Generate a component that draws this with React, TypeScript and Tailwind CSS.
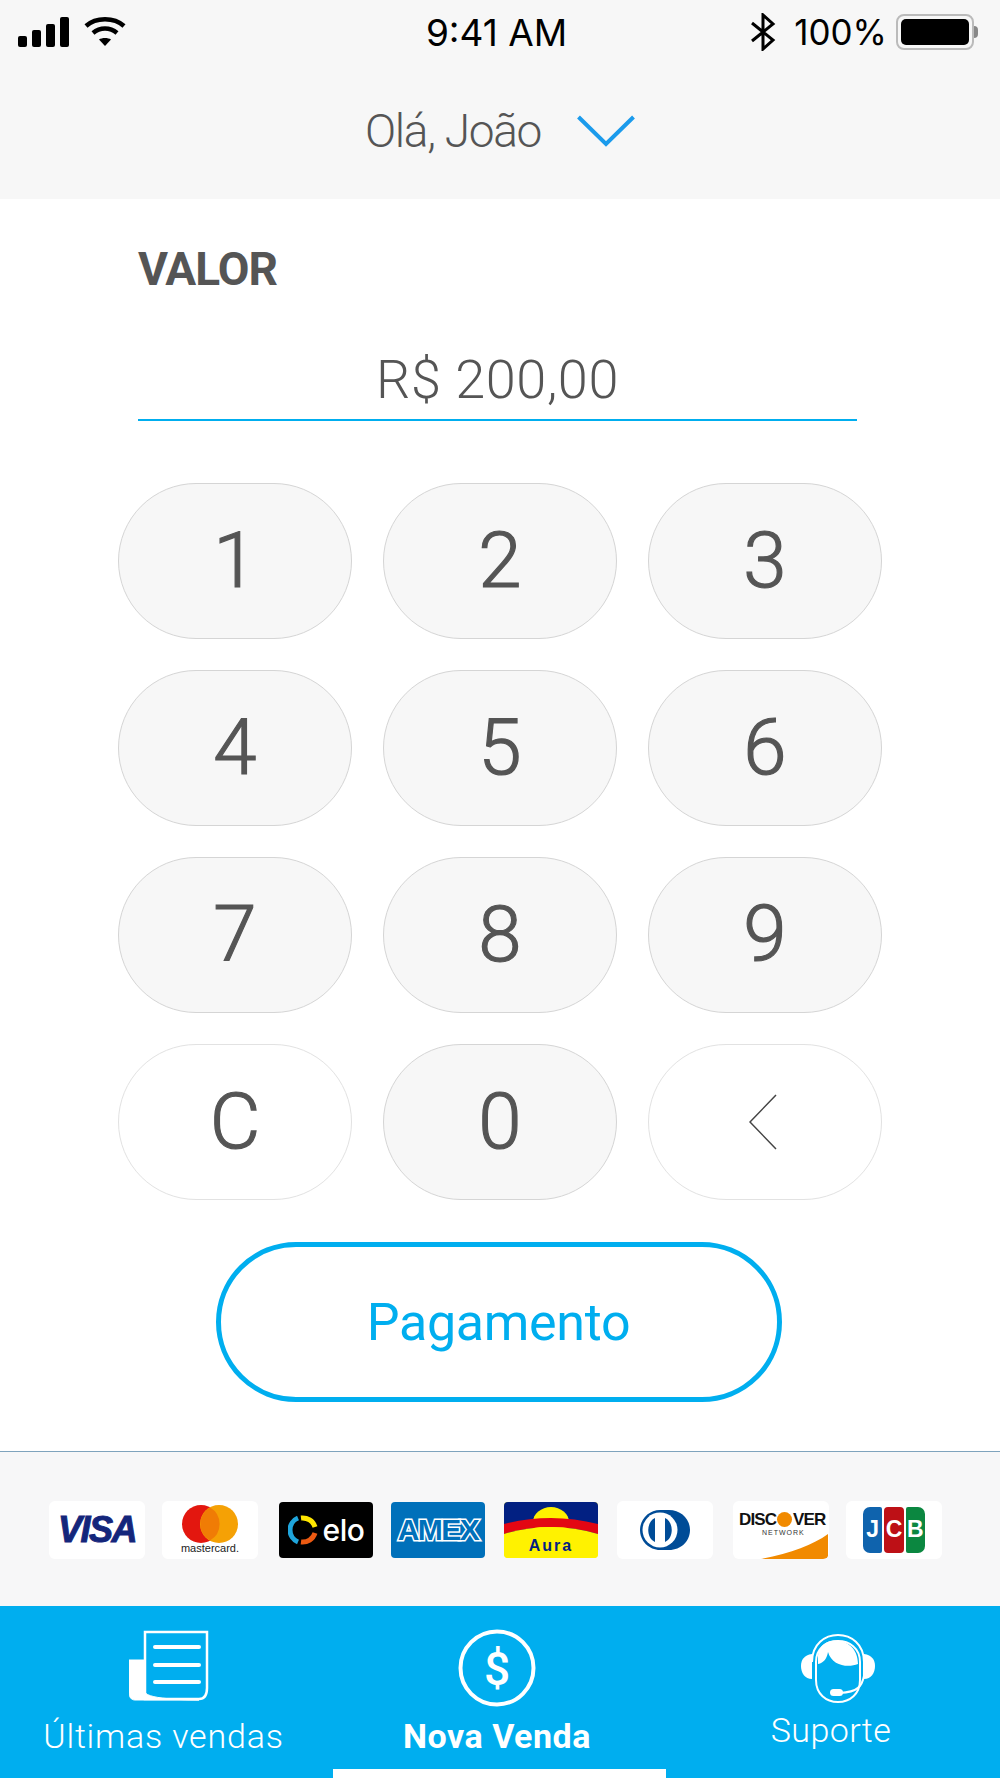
import React from "react"

const keyRows = [
  ["1", "2", "3"],
  ["4", "5", "6"],
  ["7", "8", "9"],
]

function Key({ label, plain, children }: { label?: string; plain?: boolean; children?: React.ReactNode }) {
  return (
    <div
      className={`flex h-[156px] w-[234px] items-center justify-center rounded-[78px] border text-[78px] leading-none font-light text-[#555] [-webkit-text-stroke:1.2px_#555] ${
        plain ? "border-[#e2e2e2] bg-white" : "border-[#d5d5d5] bg-[#f7f7f7]"
      }`}
    >
      {label}
      {children}
    </div>
  )
}

function StatusBar() {
  return (
    <div className="flex h-[60px] items-center justify-between pr-[22px] pl-[18px] text-black">
      <div className="flex w-[300px] items-center gap-[14px]">
        <svg width="52" height="32" viewBox="0 0 52 32" fill="#000">
          <rect x="0" y="20" width="9" height="11" rx="2" />
          <rect x="14" y="14" width="9" height="17" rx="2" />
          <rect x="28" y="8" width="9" height="23" rx="2" />
          <rect x="42" y="1" width="9" height="30" rx="2" />
        </svg>
        <svg width="42" height="32" viewBox="0 0 42 32" fill="none" stroke="#000" strokeWidth="4.5">
          <path d="M2 10C12 1 30 1 40 10" />
          <path d="M9 17C16 11 26 11 33 17" />
          <path d="M21 30L15 23.5C18 21.5 24 21.5 27 23.5Z" fill="#000" stroke="none" />
        </svg>
      </div>
      <div className="mr-[3px] font-['Inter',sans-serif] text-[37px] leading-none">9:41 AM</div>
      <div className="flex w-[300px] items-center justify-end">
        <svg width="26" height="38" viewBox="0 0 26 38" fill="none" stroke="#000" strokeWidth="3">
          <path d="M2 10L23 27L13 36V2L23 11L2 28" />
        </svg>
        <span className="ml-[18px] font-['Inter',sans-serif] text-[35px] leading-none">100%</span>
        <div className="ml-[9px] flex items-center">
          <div className="flex h-[36px] w-[78px] items-center rounded-[8px] border-2 border-[#bbb] p-[3px]">
            <div className="h-full w-full rounded-[5px] bg-black" />
          </div>
          <div className="h-[12px] w-[4px] rounded-r-full bg-[#888]" />
        </div>
      </div>
    </div>
  )
}

function ReceiptIcon() {
  return (
    <svg width="80" height="72" viewBox="0 0 80 72" fill="none" stroke="#fff">
      <path d="M16 2H78V58C78 65 75 69 70 69H16Z" strokeWidth="2.5" />
      <path d="M16 30H0V62C0 67 2 70 6 70H70C67 70 18 70 16 62Z" fill="#fff" strokeWidth="1" />
      <path d="M26 17H70M26 35H70M26 52H70" strokeWidth="4" strokeLinecap="round" />
    </svg>
  )
}

function DollarIcon() {
  return (
    <svg width="78" height="78" viewBox="0 0 78 78" fill="none" stroke="#fff">
      <circle cx="39" cy="39" r="36.5" strokeWidth="4" />
      <text
        x="39"
        y="56"
        textAnchor="middle"
        fill="#fff"
        stroke="none"
        fontSize="46"
        fontWeight="500"
        fontFamily="Roboto, sans-serif"
      >
        $
      </text>
    </svg>
  )
}

function HeadsetIcon() {
  return (
    <svg width="76" height="72" viewBox="0 0 76 72" fill="none" stroke="#fff">
      <path d="M12 30C12 -6 64 -6 64 30V44" strokeWidth="2" />
      <path d="M16 30C16 2 60 2 60 30V48C60 62 50 70 38 70C26 70 16 62 16 48Z" strokeWidth="2" />
      <path d="M18 24C18 2 58 2 58 32C48 36 32 34 28 20C27 26 24 31 18 32Z" fill="#fff" stroke="none" />
      <path d="M12 22C4 23 1 28 1 34C1 41 5 47 12 47Z" fill="#fff" stroke="none" />
      <path d="M64 22C72 23 75 28 75 34C75 41 71 47 64 47Z" fill="#fff" stroke="none" />
      <path d="M64 44C62 54 58 60 40 61" strokeWidth="2" />
      <rect x="30" y="57" width="13" height="7" rx="3.5" fill="#fff" stroke="none" />
    </svg>
  )
}

function Card({ children, className }: { children: React.ReactNode; className?: string }) {
  return (
    <div className={`relative flex items-center justify-center overflow-hidden ${className}`}>
      {children}
    </div>
  )
}

const whiteCard = "h-[58px] w-[96px] rounded-[6px] bg-white"
const colorCard = "h-[56px] w-[94px] rounded-[4px]"

function CardLogos() {
  return (
    <div className="flex items-center pl-[49px]">
      <Card className={whiteCard}>
        <span className="font-['Liberation_Sans',sans-serif] text-[36px] leading-none font-bold tracking-[-1.5px] text-[#14267b] italic [-webkit-text-stroke:1px_#14267b]">VISA</span>
      </Card>
      <Card className={`ml-[17px] ${whiteCard}`}>
        <div className="flex flex-col items-center">
          <svg width="56" height="38" viewBox="0 0 56 38">
            <circle cx="19" cy="19" r="19" fill="#e3170f" />
            <circle cx="37" cy="19" r="19" fill="#f5a105" />
            <path d="M28 2.5A19 19 0 0 1 28 35.5A19 19 0 0 1 28 2.5Z" fill="#f07c05" />
          </svg>
          <span className="font-['Liberation_Sans',sans-serif] text-[11px] leading-[11px] text-[#222]">mastercard.</span>
        </div>
      </Card>
      <Card className={`ml-[21px] bg-black ${colorCard}`}>
        <svg width="30" height="30" viewBox="0 0 30 30" fill="none" strokeWidth="5" className="mr-[5px]">
          <path d="M10 3A13 13 0 0 0 10 27" stroke="#1fa5dc" />
          <path d="M13 3A13 13 0 0 1 27 12" stroke="#ffe600" />
          <path d="M27 18A13 13 0 0 1 13 27" stroke="#ec5a12" />
        </svg>
        <span className="font-['Inter',sans-serif] text-[30px] leading-none font-medium tracking-[-0.5px] text-white">elo</span>
      </Card>
      <Card className={`ml-[18px] bg-[#0070ba] ${colorCard}`}>
        <span className="font-['Liberation_Sans',sans-serif] text-[30px] leading-none font-bold tracking-[-1.5px] text-[#0070ba] [-webkit-text-stroke:3px_#fff] [paint-order:stroke_fill]">AMEX</span>
      </Card>
      <Card className={`ml-[19px] bg-[#fff200] ${colorCard}`}>
        <svg className="absolute inset-0" width="94" height="56" viewBox="0 0 94 56">
          <rect width="94" height="34" fill="#022082" />
          <ellipse cx="47" cy="20" rx="18" ry="15" fill="#fff200" />
          <path d="M0 22Q47 10 94 22V32Q47 18 0 32Z" fill="#e30613" />
          <path d="M0 32Q47 18 94 32V56H0Z" fill="#fff200" />
        </svg>
        <span className="relative mt-[32px] font-['Liberation_Sans',sans-serif] text-[16px] leading-none font-bold tracking-[2px] text-[#022082]">Aura</span>
      </Card>
      <Card className={`ml-[19px] ${whiteCard}`}>
        <svg width="50" height="40" viewBox="0 0 50 40">
          <path d="M20 0H29C41 0 50 9 50 20C50 31 41 40 29 40H20C9 40 0 31 0 20C0 9 9 0 20 0Z" fill="#004c97" />
          <circle cx="20" cy="20" r="17.5" fill="#fff" />
          <path d="M15 8V32C6 28 6 12 15 8ZM25 8C34 12 34 28 25 32Z" fill="#004c97" />
        </svg>
      </Card>
      <Card className={`ml-[20px] ${whiteCard}`}>
        <span className="absolute top-[10px] left-[6px] flex items-center font-['Liberation_Sans',sans-serif] text-[17px] leading-none font-bold tracking-[-0.9px] text-[#111]">
          DISC
          <span className="mx-[1px] h-[15px] w-[15px] rounded-full bg-[#f18a00]" />
          VER
        </span>
        <span className="absolute top-[28px] left-[29px] font-['Liberation_Sans',sans-serif] text-[7px] leading-none tracking-[1px] text-[#333]">NETWORK</span>
        <svg className="absolute inset-0" width="96" height="58" viewBox="0 0 96 58">
          <path d="M28 58C58 52 80 44 95 33V56Q95 58 92 58Z" fill="#f18a00" />
        </svg>
      </Card>
      <Card className={`ml-[17px] ${whiteCard}`}>
        <div className="flex h-[46px] w-[62px] gap-[2px] font-['Liberation_Sans',sans-serif] text-[23px] leading-none font-bold text-white">
          <div className="flex h-full flex-1 items-center justify-center rounded-l-[7px] rounded-r-[2px] bg-[#0f63ad]">J</div>
          <div className="flex h-full flex-1 items-center justify-center rounded-[4px] bg-[#bd1016]">C</div>
          <div className="flex h-full flex-1 items-center justify-center rounded-l-[2px] rounded-r-[7px] bg-[#0b8740]">B</div>
        </div>
      </Card>
    </div>
  )
}

export default function App() {
  return (
    <div className="flex h-[1778px] w-[1000px] flex-col bg-white font-['Roboto',sans-serif]">
      <header className="flex h-[200px] flex-col bg-[#f7f7f7] pt-[2px]">
        <StatusBar />
        <div className="mt-[37px] flex items-center justify-center gap-[36px] text-[#555]">
          <span className="text-[46px] leading-[64px] font-light tracking-[-1.3px]">Olá, João</span>
          <svg width="58" height="32" viewBox="0 0 58 32" fill="none" stroke="#1b9bec" strokeWidth="4">
            <path d="M1.5 2L29 29L56.5 2" />
          </svg>
        </div>
      </header>

      <main className="flex flex-1 flex-col">
        <div className="pt-[40px] pr-[143px] pl-[138px]">
          <div className="text-[46px] leading-[60px] font-bold tracking-[-1px] text-[#555]">VALOR</div>
          <div className="mt-[46px] border-b-2 border-[#00aeef] pb-[4px] text-center text-[54px] leading-[70px] font-light tracking-[0.6px] text-[#555]">
            R$ 200,00
          </div>
        </div>

        <div className="mt-[62px] flex flex-col gap-[31px] pr-[118px] pl-[118px]">
          {keyRows.map((row) => (
            <div key={row[0]} className="flex justify-between">
              {row.map((n) => (
                <Key key={n} label={n} />
              ))}
            </div>
          ))}
          <div className="flex justify-between">
            <Key label="C" plain />
            <Key label="0" />
            <Key plain>
              <svg width="28" height="56" viewBox="0 0 28 56" fill="none" stroke="#444" strokeWidth="1.5" className="mr-[4px]">
                <path d="M27 1L1 28L27 55" />
              </svg>
            </Key>
          </div>
        </div>

        <div className="mt-[42px] flex justify-center pr-[3px]">
          <div className="flex h-[160px] w-[566px] items-center justify-center rounded-[80px] border-[5px] border-[#00aeef] pt-[2px] text-[52px] font-normal tracking-[-0.3px] text-[#00aeef]">
            Pagamento
          </div>
        </div>

        <div className="mt-[49px] flex h-[155px] flex-col justify-center border-t border-[#7fa3bd] bg-[#f7f7f8] pt-[1px]">
          <CardLogos />
        </div>

        <nav className="relative flex h-[172px] bg-[#00aeef] pt-[20px] text-[34px] text-white">
          <div className="flex w-[333px] flex-col items-center">
            <div className="flex h-[80px] items-center pl-[4px]">
              <ReceiptIcon />
            </div>
            <div className="mt-[8px] pr-[6px] leading-[44px] font-light tracking-[0.8px]">Últimas vendas</div>
          </div>
          <div className="flex w-[333px] flex-col items-center pr-[5px]">
            <div className="flex h-[80px] items-center pt-[4px] pr-[1px]">
              <DollarIcon />
            </div>
            <div className="mt-[8px] leading-[44px] font-bold tracking-[0.5px]">Nova Venda</div>
          </div>
          <div className="flex w-[334px] flex-col items-center">
            <div className="flex h-[80px] items-center pt-[4px] pl-[9px]">
              <HeadsetIcon />
            </div>
            <div className="mt-[2px] pr-[4px] leading-[44px] font-light tracking-[0.4px]">Suporte</div>
          </div>
          <div className="absolute bottom-0 left-[333px] h-[9px] w-[333px] bg-white" />
        </nav>
      </main>
    </div>
  )
}
